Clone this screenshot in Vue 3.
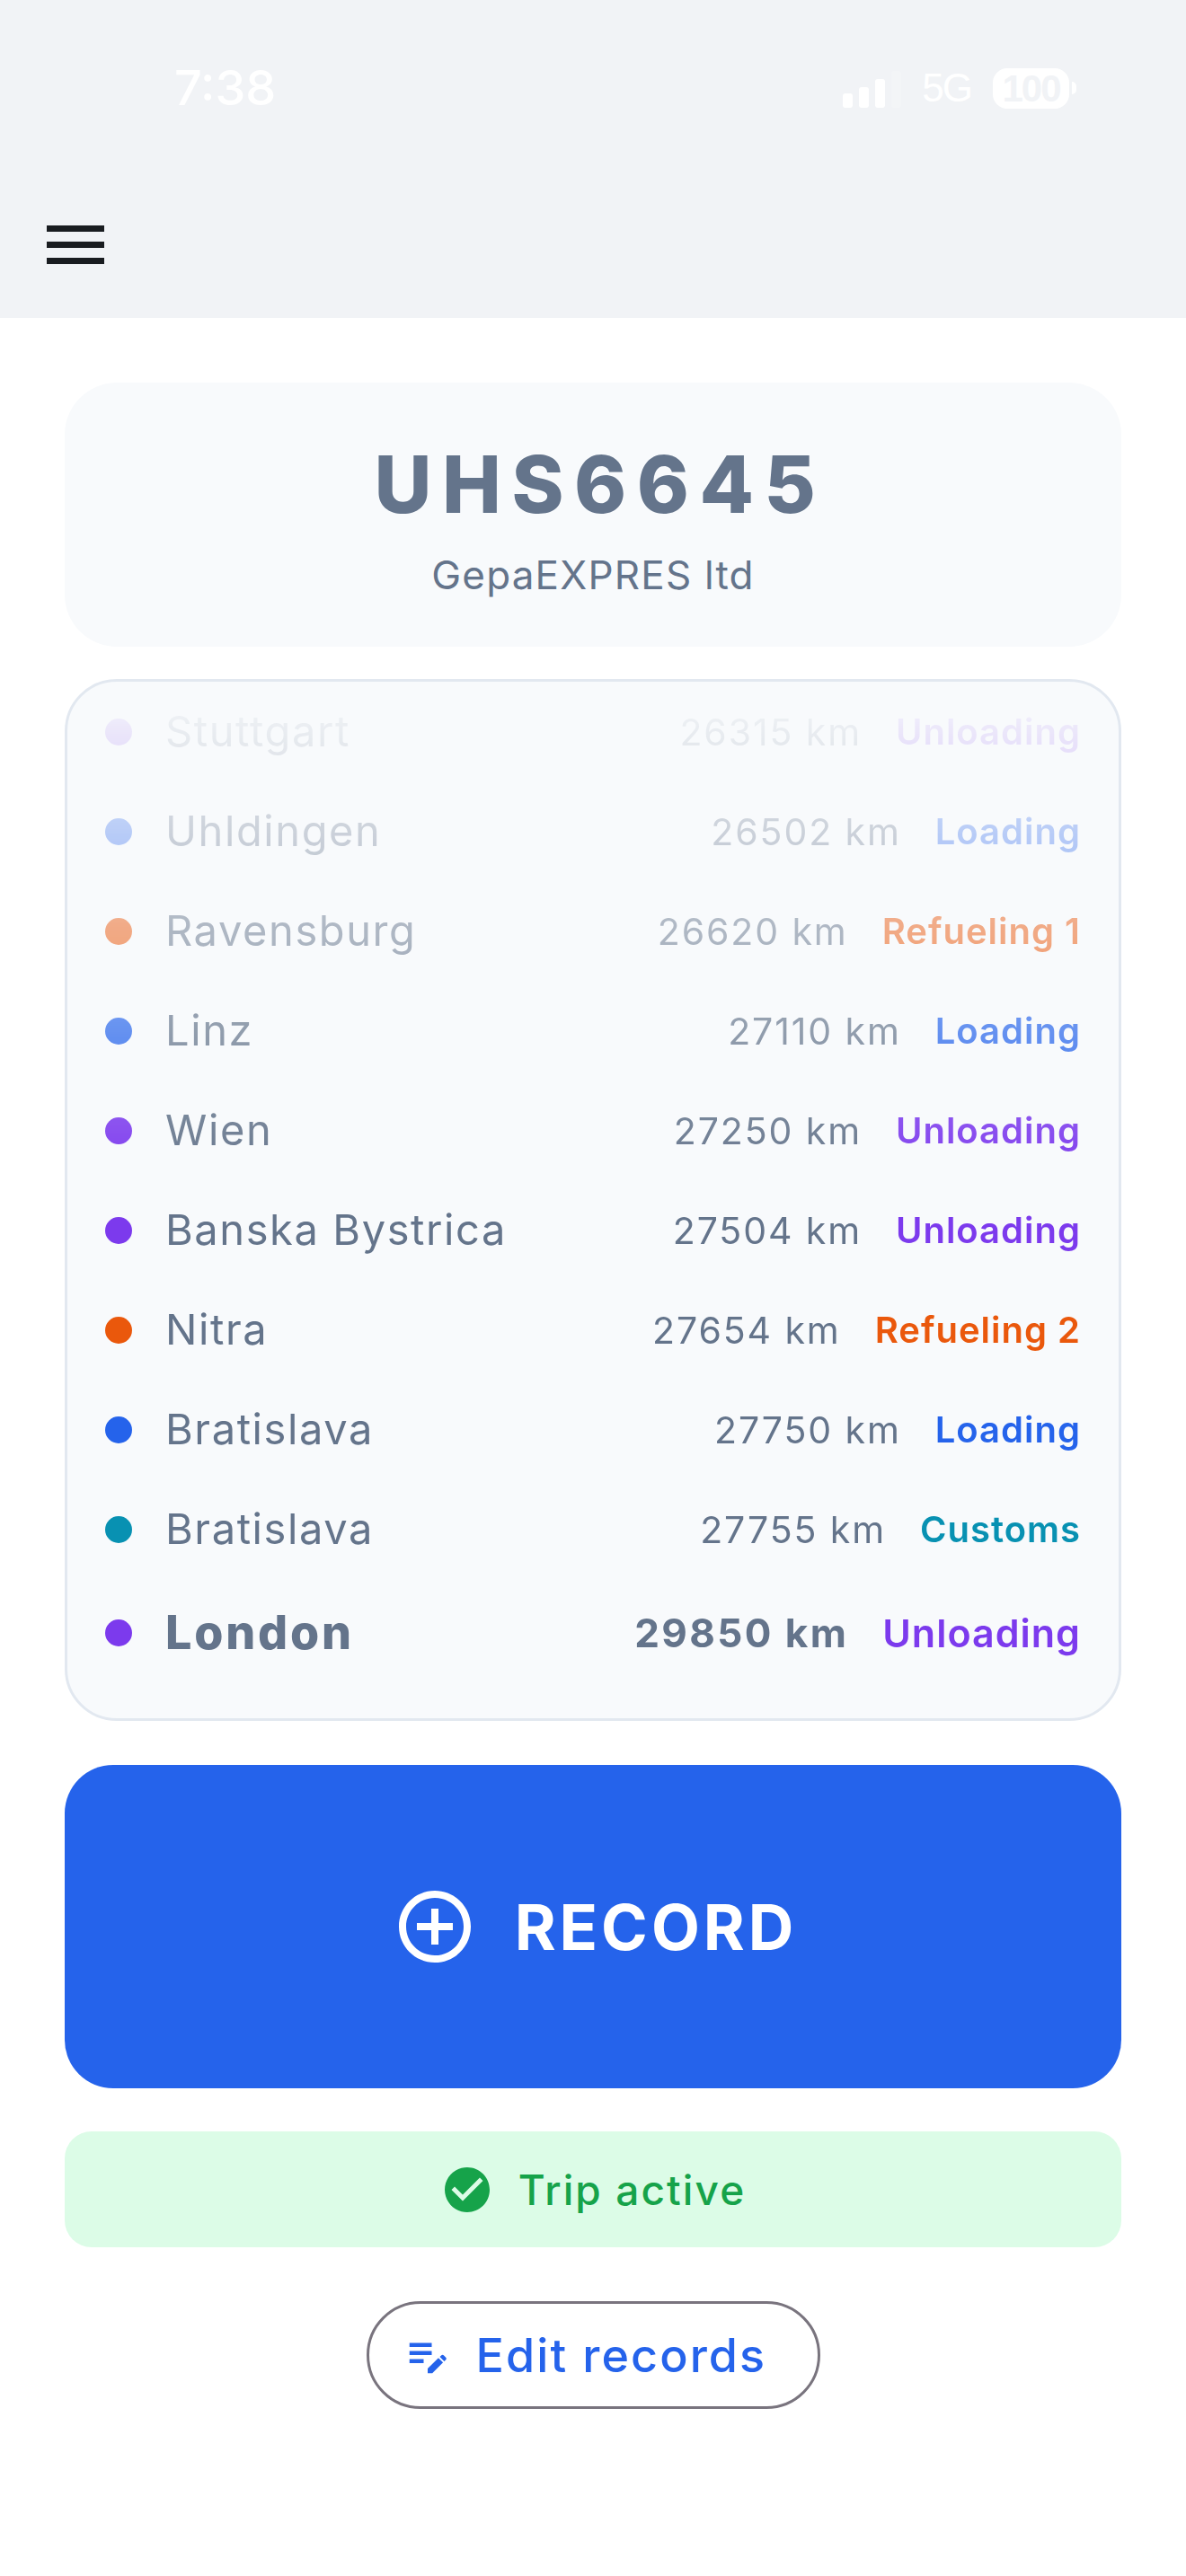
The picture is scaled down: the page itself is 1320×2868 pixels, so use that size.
<script setup>
const colors = {
  Unloading: '#7c3aed',
  Loading: '#2563eb',
  Refueling: '#ea580c',
  Customs: '#0891b2',
};

const stops = [
  { city: 'Stuttgart', km: 26315, label: 'Unloading', kind: 'Unloading' },
  { city: 'Uhldingen', km: 26502, label: 'Loading', kind: 'Loading' },
  { city: 'Ravensburg', km: 26620, label: 'Refueling 1', kind: 'Refueling' },
  { city: 'Linz', km: 27110, label: 'Loading', kind: 'Loading' },
  { city: 'Wien', km: 27250, label: 'Unloading', kind: 'Unloading' },
  { city: 'Banska Bystrica', km: 27504, label: 'Unloading', kind: 'Unloading' },
  { city: 'Nitra', km: 27654, label: 'Refueling 2', kind: 'Refueling' },
  { city: 'Bratislava', km: 27750, label: 'Loading', kind: 'Loading' },
  { city: 'Bratislava', km: 27755, label: 'Customs', kind: 'Customs' },
  { city: 'London', km: 29850, label: 'Unloading', kind: 'Unloading', last: true },
];
</script>

<template>
  <div class="screen">
    <header class="topbar">
      <div class="status">
        <span class="time">7:38</span>
        <div class="status-right">
          <div class="signal">
            <i class="b1"></i><i class="b2"></i><i class="b3"></i><i class="b4"></i>
          </div>
          <span class="net">5G</span>
          <span class="battery">100</span>
          <span class="nub"></span>
        </div>
      </div>
      <button class="menu" aria-label="Menu"><i></i><i></i><i></i></button>
    </header>

    <main class="content">
      <section class="vehicle">
        <h1>UHS6645</h1>
        <p>GepaEXPRES ltd</p>
      </section>

      <section class="trip">
        <ul class="stops">
          <li v-for="stop in stops" :key="stop.km" class="stop" :class="{ last: stop.last }">
            <span class="dot" :style="{ background: colors[stop.kind] }"></span>
            <span class="city">{{ stop.city }}</span>
            <span class="km">{{ stop.km }} km</span>
            <span class="kind" :style="{ color: colors[stop.kind] }">{{ stop.label }}</span>
          </li>
        </ul>
      </section>

      <button class="record">
        <svg width="96" height="96" viewBox="0 0 24 24" fill="#fff">
          <path d="M13 7h-2v4H7v2h4v4h2v-4h4v-2h-4V7zm-1-5C6.48 2 2 6.48 2 12s4.48 10 10 10 10-4.48 10-10S17.52 2 12 2zm0 18c-4.41 0-8-3.59-8-8s3.59-8 8-8 8 3.59 8 8-3.59 8-8 8z" />
        </svg>
        <span>RECORD</span>
      </button>

      <div class="active">
        <svg width="60" height="60" viewBox="0 0 24 24" fill="#16a34a">
          <path d="M12 2C6.48 2 2 6.48 2 12s4.48 10 10 10 10-4.48 10-10S17.52 2 12 2zm-2 15l-5-5 1.41-1.41L10 14.17l7.59-7.59L19 8l-9 9z" />
        </svg>
        <span>Trip active</span>
      </div>

      <button class="edit">
        <svg width="54" height="54" viewBox="0 0 24 24" fill="#2563eb">
          <path d="M3 6h11v2H3zM3 10h11v2H3zM3 14h7v2H3z" />
          <path d="M12 21v-2.3l5.3-5.3 2.3 2.3L14.3 21z" />
          <path d="M18 12.9l.8-.8c.3-.3.8-.3 1.1 0l1.1 1.1c.3.3.3.8 0 1.1l-.8.8z" />
        </svg>
        <span>Edit records</span>
      </button>
    </main>
  </div>
</template>

<style>
body {
  background: #fff;
}
</style>

<style scoped>
.screen {
  width: 1320px;
  height: 2868px;
  font-family: Inter, "Liberation Sans", sans-serif;
  color: #64748b;
  overflow: hidden;
}

.topbar {
  height: 354px;
  box-sizing: border-box;
  background: #f1f3f6;
  padding-top: 70px;
}

.status {
  height: 56px;
  display: flex;
  align-items: center;
  justify-content: space-between;
  padding: 0 122px 0 194px;
  color: #fff;
}

.time {
  font-size: 54px;
  font-weight: 500;
  line-height: 56px;
}

.status-right {
  display: flex;
  align-items: center;
}

.signal {
  display: flex;
  align-items: flex-end;
  gap: 7px;
  height: 41px;
  margin-top: 2px;
}

.signal i {
  display: block;
  width: 11px;
  background: #fff;
  border-radius: 3px;
}

.signal .b1 { height: 16px; }
.signal .b2 { height: 23px; }
.signal .b3 { height: 32px; }
.signal .b4 { height: 41px; opacity: 0.2; }

.net {
  margin-left: 23px;
  font-family: "Liberation Sans", sans-serif;
  font-size: 44px;
  line-height: 46px;
  letter-spacing: -2px;
}

.battery {
  flex: none;
  margin-left: 24px;
  width: 85px;
  height: 45px;
  border-radius: 16px;
  background: #fff;
  color: #f1f3f6;
  font-family: "Liberation Sans", sans-serif;
  font-size: 42px;
  font-weight: 700;
  line-height: 45px;
  letter-spacing: -2px;
  text-align: center;
}

.nub {
  flex: none;
  margin-left: 3px;
  width: 5px;
  height: 14px;
  border-radius: 0 7px 7px 0;
  background: #fff;
}

.menu {
  display: flex;
  flex-direction: column;
  gap: 11px;
  width: 64px;
  margin: 125px 0 0 52px;
  padding: 0;
  border: 0;
  background: none;
}

.menu i {
  display: block;
  width: 64px;
  height: 7px;
  background: #191c20;
}

.content {
  display: flex;
  flex-direction: column;
  padding: 72px 72px 0;
}

.vehicle {
  height: 294px;
  box-sizing: border-box;
  padding-top: 60px;
  border-radius: 58px;
  background: #f8fafc;
  text-align: center;
}

.vehicle h1 {
  margin: 0;
  padding-left: 16px;
  font-size: 88px;
  font-weight: 800;
  line-height: 106px;
  letter-spacing: 11.5px;
}

.vehicle p {
  margin: 21px 0 0;
  font-size: 44px;
  line-height: 54px;
  letter-spacing: 1.2px;
}

.trip {
  height: 1160px;
  box-sizing: border-box;
  margin-top: 36px;
  border: 3px solid #e2e8f0;
  border-radius: 58px;
  background: #f8fafc;
}

.stops {
  margin: 0;
  padding: 0;
  list-style: none;
  -webkit-mask-image: linear-gradient(to bottom, transparent 0, #000 560px);
  mask-image: linear-gradient(to bottom, transparent 0, #000 560px);
}

.stop {
  display: flex;
  align-items: center;
  height: 111px;
  padding: 0 42px 0 42px;
}

.stop.last {
  height: 120px;
}

.dot {
  flex: none;
  width: 30px;
  height: 30px;
  border-radius: 50%;
}

.city {
  margin-left: 37px;
  font-size: 47px;
  letter-spacing: 1.6px;
  transform: translateY(-1px);
}

.km {
  margin-left: auto;
  font-size: 41px;
  letter-spacing: 1.9px;
}

.kind {
  margin-left: 38px;
  font-size: 40px;
  font-weight: 600;
  letter-spacing: 1px;
}

.last .city {
  font-size: 52px;
  font-weight: 800;
  letter-spacing: 2.8px;
}

.last .km {
  font-size: 44px;
  font-weight: 700;
  letter-spacing: 2.4px;
}

.last .kind {
  font-size: 43px;
}

.record {
  display: flex;
  align-items: center;
  justify-content: center;
  gap: 41px;
  height: 360px;
  margin-top: 49px;
  padding: 0 0 0 3px;
  border: 0;
  border-radius: 54px;
  background: #2563eb;
  color: #fff;
  font-family: inherit;
  font-size: 70px;
  font-weight: 700;
  letter-spacing: 4px;
}

.active {
  display: flex;
  align-items: center;
  justify-content: center;
  gap: 27px;
  height: 129px;
  margin-top: 48px;
  border-radius: 30px;
  background: #dcfce7;
  color: #16a34a;
  font-size: 46px;
  font-weight: 500;
  letter-spacing: 2.1px;
}

.edit {
  align-self: center;
  display: flex;
  align-items: center;
  gap: 27px;
  box-sizing: border-box;
  width: 505px;
  height: 120px;
  margin-top: 60px;
  padding: 0 0 0 38px;
  border: 3px solid #79747e;
  border-radius: 60px;
  background: #fff;
  color: #2563eb;
  font-family: inherit;
  font-size: 52px;
  font-weight: 500;
  letter-spacing: 2.1px;
}
</style>
